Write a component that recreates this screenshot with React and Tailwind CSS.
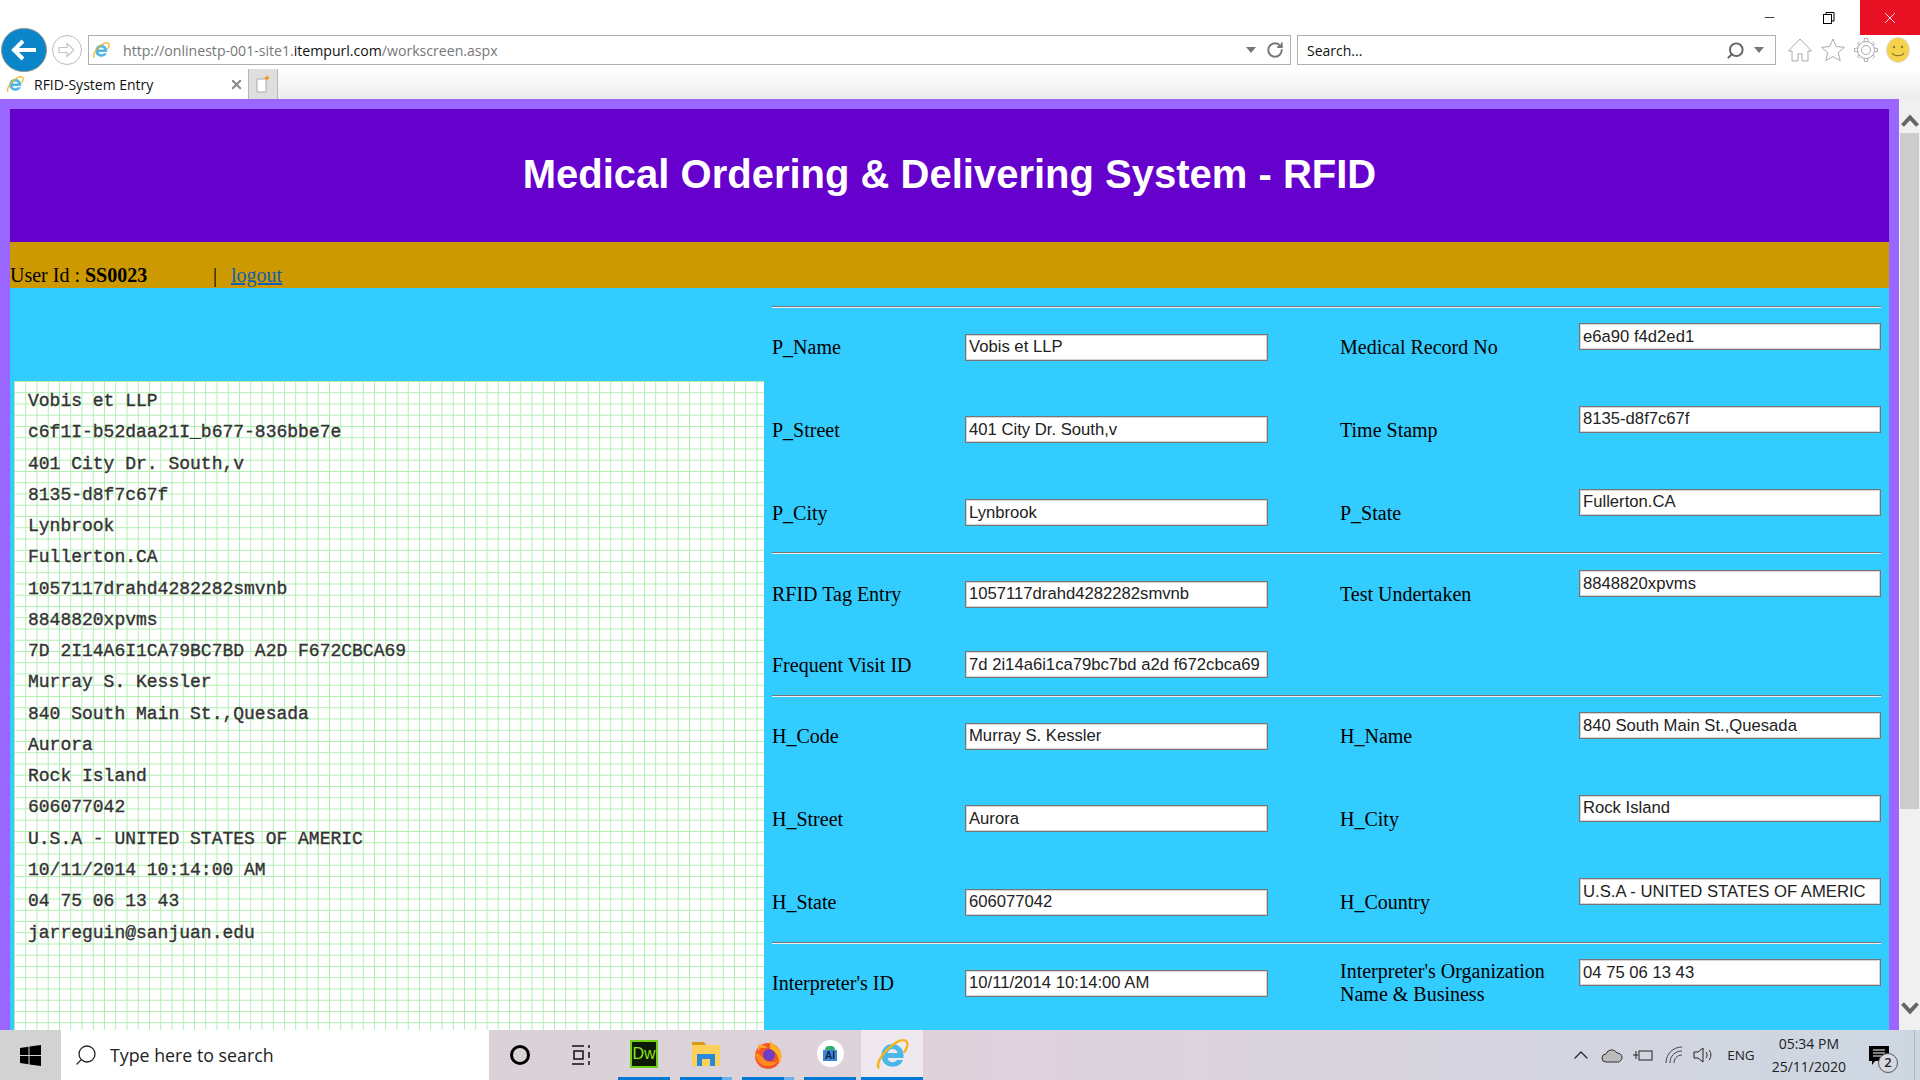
import React from "react";
import { X, Minus, RotateCw, Search, ChevronUp } from "lucide-react";

const leftLines = [
  "Vobis et LLP",
  "c6f1I-b52daa21I_b677-836bbe7e",
  "401 City Dr. South,v",
  "8135-d8f7c67f",
  "Lynbrook",
  "Fullerton.CA",
  "1057117drahd4282282smvnb",
  "8848820xpvms",
  "7D 2I14A6I1CA79BC7BD A2D F672CBCA69",
  "Murray S. Kessler",
  "840 South Main St.,Quesada",
  "Aurora",
  "Rock Island",
  "606077042",
  "U.S.A - UNITED STATES OF AMERIC",
  "10/11/2014 10:14:00 AM",
  "04 75 06 13 43",
  "jarreguin@sanjuan.edu",
];

const IeLogo = ({ size = 20 }) => (
  <svg width={size} height={size} viewBox="0 0 24 24">
    <path d="M12.500 5c-4.500 0-8 3.400-8 8s3.500 8 8 8c3.400 0 6.200-1.700 7.300-4.700h-4.300c-.7 1-1.700 1.500-3 1.500-2 0-3.400-1.200-3.600-3h11.100c.1-.6.200-1.200.2-1.800 0-4.500-3.500-8-8.200-8zm-3.600 6.300c.3-1.600 1.700-2.800 3.600-2.800s3.300 1.200 3.500 2.800z" fill="#4cb8ea" />
    <path d="M3 22c-2.500-2 .5-8.500 6-13.500s10.500-7.500 13-5.500c1.500 1.500.5 5-1.500 8" fill="none" stroke="#f2b61e" strokeWidth="1.700" />
  </svg>
);

const Field = ({ value }) => (
  <input
    readOnly
    value={value}
    className="h-[27px] w-full border border-[#767676] bg-white px-[3px] font-['Liberation_Sans',sans-serif] text-[16.670px] text-[#222] shadow-[inset_1px_1px_0_#d4d4d4,inset_-1px_-1px_0_#d4d4d4]"
  />
);

const Row = ({ h, l1, v1, l2, v2, twoLine }) => (
  <div className="grid grid-cols-[193px_303px_72px_239px_1fr] items-center" style={{ height: h }}>
    <span>{l1}</span>
    <Field value={v1} />
    <span />
    {l2 ? <span className={twoLine ? "leading-[23px]" : ""}>{l2}</span> : <span />}
    {v2 ? (
      <div className="mb-6">
        <Field value={v2} />
      </div>
    ) : (
      <span />
    )}
  </div>
);

const Divider = () => <div className="h-[2px] border-t border-t-[#777] bg-[#f0f0f0]" />;

const Chrome = () => (
  <div className="relative h-[99px] shrink-0 bg-white font-['Open_Sans',sans-serif]">
    <div className="flex h-[35px] items-start justify-end">
      <div className="flex h-[35px] w-[58px] items-center justify-center">
        <Minus size={15} strokeWidth={1.2} />
      </div>
      <div className="flex h-[35px] w-[62px] items-center justify-center">
        <svg width="14" height="14" viewBox="0 0 14 14" fill="none" stroke="#000">
          <rect x="1.500" y="3.500" width="8" height="9" />
          <path d="M4 3.500V1.500h8v8.500h-2.500" />
        </svg>
      </div>
      <div className="flex h-[35px] w-[60px] items-center justify-center bg-[#e81123]">
        <X size={18} strokeWidth={1.2} color="#fff" />
      </div>
    </div>
    <div className="flex h-[30px] items-center pl-[1px]">
      <div className="z-10 -mt-[1px] flex h-[44px] w-[46px] items-center justify-center rounded-full border border-[#999] bg-[#0a85c9]">
        <svg width="28" height="24" viewBox="0 0 28 24" fill="none" stroke="#fff" strokeWidth="4">
          <path d="M13 3 4 12l9 9M4 12h22" />
        </svg>
      </div>
      <div className="ml-[5px] flex h-[30px] w-[30px] items-center justify-center rounded-full border border-[#bbb]">
        <svg width="18" height="16" viewBox="0 0 18 16" fill="none" stroke="#c4c4c4" strokeWidth="1.200">
          <path d="M1 5.500h8V1.500l7 6.500-7 6.500v-4H1z" />
        </svg>
      </div>
      <div className="ml-[6px] flex h-[30px] w-[1203px] items-center border border-[#b0b0b0] pl-[3px] pr-[6px]">
        <IeLogo size={18} />
        <span className="ml-[13px] pt-[1px] text-[14.100px] text-[#777]">
          http://onlinestp-001-site1.<span className="text-[#111]">itempurl.com</span>/workscreen.aspx
        </span>
        <svg className="ml-auto" width="10" height="6" viewBox="0 0 10 6">
          <path d="M0 0h10L5 6z" fill="#777" />
        </svg>
        <RotateCw size={18} strokeWidth={2.500} color="#777" className="ml-[10px]" />
      </div>
      <div className="ml-[6px] flex h-[30px] w-[479px] items-center border border-[#b0b0b0] pl-[9px] pr-[11px]">
        <span className="text-[14px] text-[#111]">Search...</span>
        <Search size={19} strokeWidth={2.500} color="#666" className="ml-auto -scale-x-100" />
        <svg className="ml-[9px]" width="10" height="6" viewBox="0 0 10 6">
          <path d="M0 0h10L5 6z" fill="#777" />
        </svg>
      </div>
      <div className="ml-[11px] flex items-center gap-[7px]">
        <svg width="26" height="26" viewBox="0 0 26 26" fill="#fff" stroke="#aaa">
          <path d="M13 2 1.500 14h3.500v10h6v-7h4v7h6V14h3.500z" />
        </svg>
        <svg width="26" height="26" viewBox="0 0 26 26" fill="#fff" stroke="#aaa">
          <path d="m13 2 3.300 7.500 8.200.8-6.200 5.400 1.900 8L13 19.500l-7.200 4.200 1.900-8-6.200-5.400 8.200-.8z" />
        </svg>
        <svg width="26" height="26" viewBox="0 0 26 26" fill="none" stroke="#aaa" strokeWidth="1">
          <circle cx="13" cy="13" r="4.500" />
          <circle cx="13" cy="13" r="8.500" />
          <path d="M11 4.500 11.500 1.500h3l.5 3M11 21.500l.5 3h3l.5-3M4.500 11l-3 .5v3l3 .5M21.500 11l3 .5v3l-3 .5M6.500 5l-2 1.500 1.500 2M19.500 5l2 1.500-1.500 2M6.500 21l-2-1.500 1.500-2M19.500 21l2-1.500-1.500-2" />
        </svg>
        <svg width="24" height="26" viewBox="0 0 24 26">
          <ellipse cx="12" cy="13" rx="11.500" ry="12.500" fill="#f4d24c" stroke="#ddd" />
          <circle cx="8" cy="10" r="1.200" fill="#8a7a2a" />
          <circle cx="16" cy="10" r="1.200" fill="#8a7a2a" />
          <path d="M6 16c2 3.500 10 3.500 12 0" fill="none" stroke="#8a7a2a" strokeWidth="1.200" />
        </svg>
      </div>
    </div>
    <div className="mt-[4px] flex h-[30px] bg-gradient-to-b from-white to-[#ececec]">
      <div className="flex w-[249px] items-center border-r border-[#b8b8b8] bg-white pl-[6px] pr-[4px]">
        <IeLogo size={18} />
        <span className="ml-[10px] text-[14px] text-[#111]">RFID-System Entry</span>
        <X size={15} strokeWidth={3} color="#888" className="ml-auto" />
      </div>
      <div className="flex w-[29px] items-center justify-center border-r border-[#b8b8b8] bg-[#dedede]">
        <svg width="14" height="18" viewBox="0 0 14 18">
          <path d="M1 4h9v13H1z" fill="#fff" stroke="#aaa" />
          <path d="M11 0l1 2 2 1-2 1-1 2-1-2-2-1 2-1z" fill="#f39a16" />
        </svg>
      </div>
    </div>
  </div>
);

// one pinned taskbar app, the strip below is its "running" mark
const TaskCell = ({ children, active, split }) => (
  <div className={`flex h-full w-[62px] flex-col ${active ? "bg-[#efe8ee]" : ""}`}>
    <div className="flex flex-1 items-center justify-center">{children}</div>
    <div className={`flex h-[3px] ${active ? "" : "mx-[5px]"}`}>
      <div className="flex-1 bg-[#0078d4]" />
      {split && <div className="w-[10px] bg-[#6cb2e8]" />}
    </div>
  </div>
);

const Taskbar = () => (
  <div className="flex h-[50px] shrink-0 items-center bg-gradient-to-r from-[#d2d2d2] via-[#e0d2dc] to-[#cdd7e2] font-['Open_Sans',sans-serif] text-[#222]">
    <div className="flex h-full w-[61px] items-center justify-center">
      <svg width="21" height="21" viewBox="0 0 21 21" fill="#000">
        <path d="M0 3l8.500-1.200v8.200H0zM9.500 1.600 21 0v10H9.500zM0 11h8.500v8.200L0 18zM9.500 11H21v10L9.500 19.400z" />
      </svg>
    </div>
    <div className="flex h-full w-[428px] items-center bg-white pl-[13px]">
      <Search size={24} strokeWidth={1.300} className="-scale-x-100" />
      <span className="ml-[12px] text-[17.800px]">Type here to search</span>
    </div>
    <div className="flex h-full w-[62px] items-center justify-center">
      <div className="h-[20px] w-[20px] rounded-full border-[3px] border-black" />
    </div>
    <div className="flex h-full w-[62px] items-center justify-center">
      <svg width="22" height="22" viewBox="0 0 22 22" fill="none" stroke="#111" strokeWidth="1.500">
        <path d="M1 2h12M1 20h12M3 7h9v8H3zM18 1v3M18 8v6M18 17v4" />
      </svg>
    </div>
    <TaskCell>
      <div className="flex h-[28px] w-[28px] items-center justify-center border-2 border-[#6ccf14] bg-[#0c1a04] font-['Liberation_Sans',sans-serif] text-[16px] text-[#8ee021]">
        Dw
      </div>
    </TaskCell>
    <TaskCell split>
      <svg width="28" height="24" viewBox="0 0 28 24">
        <path d="M0 0h12l2 3H0z" fill="#d99a12" />
        <path d="M0 3h28v21H0z" fill="#fbd15b" />
        <path d="M5 12h18v12h-5v-7h-8v7H5z" fill="#2b88d8" />
      </svg>
    </TaskCell>
    <TaskCell split>
      <svg width="30" height="30" viewBox="0 0 30 30">
        <circle cx="15" cy="17" r="13" fill="#f4562c" />
        <path d="M17 0c0 4 4 5 8 9 5 5 4 12 1 16 0-8-3-13-9-15z" fill="#ffb11f" />
        <path d="M2 14c1 8 7 14 15 13 4-1 7-3 9-6-4 3-10 3-14 0-3-3-5-7-10-7z" fill="#ff8a1e" />
        <path d="M5 6c3-1 7 0 9 3H8c-2 1-3 3-3 5z" fill="#ffa12a" />
        <circle cx="16" cy="16" r="6" fill="#6f3cc4" />
      </svg>
    </TaskCell>
    <TaskCell>
      <div className="flex h-[27px] w-[27px] flex-col items-center justify-center rounded-full bg-white">
        <div className="h-[4px] w-[10px] rounded-t bg-[#2fae6e]" />
        <div className="flex h-[11px] w-[14px] items-center justify-center bg-[#3f86d8] font-['Liberation_Sans',sans-serif] text-[10px] font-bold text-[#10233f]">
          AI
        </div>
      </div>
    </TaskCell>
    <TaskCell active>
      <IeLogo size={34} />
    </TaskCell>
    <div className="ml-auto flex h-full items-center">
      <ChevronUp size={24} strokeWidth={1.200} />
      <svg className="ml-[8px]" width="22" height="15" viewBox="0 0 22 15">
        <path d="M5 14a4 4 0 0 1 0-8 6 6 0 0 1 11-1 4.500 4.500 0 0 1 1 9z" fill="#bbb" stroke="#333" />
      </svg>
      <svg className="ml-[10px]" width="20" height="14" viewBox="0 0 20 14" fill="none" stroke="#222">
        <rect x="6" y="3" width="13" height="9" />
        <path d="M0 7h5M3 3v8" />
      </svg>
      <svg className="ml-[12px]" width="18" height="18" viewBox="0 0 18 18" fill="none" stroke="#444">
        <path d="M1 17C1 8 8 1 17 1M5 17c0-7 5-12 12-12M9 17c0-4 3-8 8-8" />
      </svg>
      <svg className="ml-[10px]" width="20" height="18" viewBox="0 0 20 18" fill="none" stroke="#222">
        <path d="M1 6h4l5-4v14l-5-4H1zM13 6c1.500 2 1.500 4 0 6M16 4c2.500 3 2.500 7 0 10" />
      </svg>
      <span className="ml-[14px] text-[13.500px]">ENG</span>
      <div className="ml-[17px] flex flex-col items-center text-[14px] leading-[23px]">
        <span>05:34 PM</span>
        <span>25/11/2020</span>
      </div>
      <div className="relative ml-[23px]">
        <svg width="20" height="19" viewBox="0 0 20 19">
          <path d="M0 0h20v15H6l-3 4v-4H0z" fill="#000" />
          <path d="M4 4h12M4 7h12M4 10h12" stroke="#fff" />
        </svg>
        <span className="absolute -bottom-[8px] -right-[9px] flex h-[20px] w-[20px] items-center justify-center rounded-full border border-[#555] bg-[#d6d9e0] text-[13px] font-semibold">
          2
        </span>
      </div>
      <div className="ml-[25px] h-full w-[6px] border-l border-[#aeb4bc]" />
    </div>
  </div>
);

export default function App() {
  return (
    <div className="flex h-screen flex-col overflow-hidden">
      <Chrome />
      <div className="flex min-h-0 flex-1">
        <div className="flex min-w-0 flex-1 flex-col overflow-hidden bg-[#9966ff] pl-[10px] pr-[10px] pt-[10px]">
          <div className="flex h-[133px] shrink-0 items-center justify-center bg-[#6600cc] pb-[3px] font-['Liberation_Sans',sans-serif] text-[40px] font-bold text-white">
            Medical Ordering &amp; Delivering System - RFID
          </div>
          <div className="flex h-[46px] shrink-0 items-end bg-[#cc9900] pb-[1px] font-['Liberation_Serif',serif] text-[20px] leading-[23px] text-black">
            <span className="w-[203px]">
              User Id : <b>SS0023</b>
            </span>
            <span>|</span>
            <a href="#" className="ml-[14px] text-[#0e5fb8] underline">
              logout
            </a>
          </div>
          <div className="flex min-h-0 flex-1 bg-[#33ccff] font-['Liberation_Serif',serif] text-[20px] text-black">
            <div className="flex w-[754px] shrink-0 flex-col pl-[4px] pt-[93px]">
              <div className="flex-1 bg-white bg-[linear-gradient(#aeeeae_1.200px,transparent_1.200px),linear-gradient(90deg,#aeeeae_1.200px,transparent_1.200px)] bg-[size:11.250px_11.250px] pl-[14px] pt-[5px] font-['Liberation_Mono',monospace] text-[18px] leading-[31.270px] text-[#333] [-webkit-text-stroke:0.35px_#333] whitespace-pre">
                {leftLines.map((line) => (
                  <div key={line}>{line}</div>
                ))}
              </div>
            </div>
            <div className="ml-[8px] flex-1 pr-[8px] pt-[18px]">
              <Divider />
              <Row h={78} l1="P_Name" v1="Vobis et LLP" l2="Medical Record No" v2="e6a90 f4d2ed1" />
              <Row h={87} l1="P_Street" v1="401 City Dr. South,v" l2="Time Stamp" v2="8135-d8f7c67f" />
              <Row h={79} l1="P_City" v1="Lynbrook" l2="P_State" v2="Fullerton.CA" />
              <Divider />
              <Row h={80} l1="RFID Tag Entry" v1="1057117drahd4282282smvnb" l2="Test Undertaken" v2="8848820xpvms" />
              <Row h={61} l1="Frequent Visit ID" v1="7d 2i14a6i1ca79bc7bd a2d f672cbca69" />
              <Divider />
              <Row h={78} l1="H_Code" v1="Murray S. Kessler" l2="H_Name" v2="840 South Main St.,Quesada" />
              <Row h={87} l1="H_Street" v1="Aurora" l2="H_City" v2="Rock Island" />
              <Row h={80} l1="H_State" v1="606077042" l2="H_Country" v2="U.S.A - UNITED STATES OF AMERIC" />
              <Divider />
              <Row h={78} l1="Interpreter's ID" v1="10/11/2014 10:14:00 AM" l2="Interpreter's Organization Name & Business" v2="04 75 06 13 43" twoLine />
            </div>
          </div>
        </div>
        <div className="flex w-[21px] shrink-0 flex-col items-center bg-[#f0f0f0] pb-[15px] pt-[15px]">
          <svg width="18" height="13" viewBox="0 0 18 13" fill="none" stroke="#666" strokeWidth="4">
            <path d="M1.500 11.500 9 3.500l7.500 8" />
          </svg>
          <div className="mt-[6px] h-[676px] w-[19px] bg-[#cdcdcd]" />
          <svg className="mt-auto" width="18" height="13" viewBox="0 0 18 13" fill="none" stroke="#666" strokeWidth="4">
            <path d="M1.500 1.500 9 9.500l7.500-8" />
          </svg>
        </div>
      </div>
      <Taskbar />
    </div>
  );
}
